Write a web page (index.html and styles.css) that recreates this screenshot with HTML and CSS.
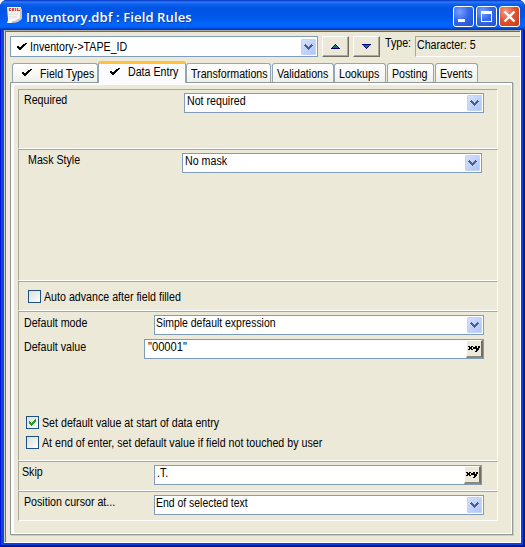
FILE: index.html
```html
<!DOCTYPE html>
<html lang="en">
<head>
<meta charset="utf-8">
<title>Inventory.dbf : Field Rules</title>
<link rel="stylesheet" href="styles.css">
</head>
<body>
<svg width="0" height="0" class="defs">
  <symbol id="tick" viewBox="0 0 10 8"><path d="M0 3h2v1h2V3h1V2h1V1h2V0h2v1H9v1H8v1H7v1H6v1H5v1H4v1H2V6H1V5H0z" fill="#000"/></symbol>
  <symbol id="chev" viewBox="0 0 9 6"><path d="M0 1h1V0h1v1h1v1h1v1h1V2h1V1h1V0h1v1h1v1H8v1H7v1H6v1H5v1H4V5H3V4H2V3H1V2H0z" fill="#4d6185"/></symbol>
  <symbol id="xy" viewBox="0 0 12 6"><path d="M0 0h2v1h1V0h2v1H4v2h1v1H3V3H2v1H0V3h1V1H0zM5 1h2v2H5zM7 0h2v2h1V0h2v2h-1v2h-1v1H9v1H7V5h1V3H7z" fill="#000"/></symbol>
</svg>
<div class="window">
  <header class="titlebar">
    <svg class="doc" width="17" height="17" viewBox="0 0 17 17"><path d="M1 0h14v12l-2 1-2 2-3-1-2 2H1l1-3z" fill="#f6f4f2"/><path d="M14 1l2 1v10l-4 3-4 1-3-1 4-1 5-3z" fill="#c9c4c4"/><path d="M2 1h12v3H2z" fill="#f3c9bd"/><path d="M3 1h2v1H4v1h1v1H3zM6 1h2v3H6zM9 1h1v3H9zM11 1h1v2h2v1h-3z" fill="#d34b3c"/><path d="M3 7h9M3 10h8" stroke="#ddd9d8"/></svg>
    <h1>Inventory.dbf : Field Rules</h1>
    <div class="winbtn"><svg width="19" height="19"><path d="M4 12h7v3H4z" fill="#fff"/></svg></div>
    <div class="winbtn"><svg width="19" height="19"><path d="M4 4h11v11H4zm1 3v7h9V7z" fill="#fff" fill-rule="evenodd"/></svg></div>
    <div class="winbtn close"><svg width="19" height="19"><path d="M4.500 4.500l10 10m0-10l-10 10" stroke="#fff" stroke-width="2.300"/></svg></div>
  </header>
  <main class="client">
    <div class="toolbar">
      <div class="combo field-combo"><svg class="tick" width="10" height="8"><use href="#tick"/></svg><span>Inventory-&gt;TAPE_ID</span><i class="drop"><svg width="9" height="6"><use href="#chev"/></svg></i></div>
      <div class="nav"><svg width="9" height="5"><path d="M4 0h1v1h1v1h1v1h1v1h1v1H0V4h1V3h1V2h1V1h1z" fill="#000080"/><path d="M4 1h1v1h1v1h1v1H2V3h1V2h1z" fill="#008080"/></svg></div>
      <div class="nav"><svg width="9" height="5"><path d="M0 0h9v1H8v1H7v1H6v1H5v1H4V4H3V3H2V2H1V1H0z" fill="#000080"/><path d="M1 1h7v1H6v1H5v1H4V3H3V2H1z" fill="#008060"/></svg></div>
      <span class="type">Type:</span>
      <div class="sunken"><span>Character: 5</span></div>
    </div>
    <nav class="tabs">
      <div class="tab t1"><svg class="tick" width="10" height="8"><use href="#tick"/></svg><span>Field Types</span></div>
      <div class="tab active"><svg class="tick" width="10" height="8"><use href="#tick"/></svg><span>Data Entry</span></div>
      <div class="tab t3"><span>Transformations</span></div>
      <div class="tab t4"><span>Validations</span></div>
      <div class="tab t5"><span>Lookups</span></div>
      <div class="tab t6"><span>Posting</span></div>
      <div class="tab t7"><span>Events</span></div>
    </nav>
    <section class="panel">
      <div class="group g-required">
        <div class="row"><label>Required</label><div class="combo w300"><span>Not required</span><i class="drop"><svg width="9" height="6"><use href="#chev"/></svg></i></div></div>
      </div>
      <div class="group g-mask">
        <div class="row"><label class="mask-label">Mask Style</label><div class="combo w300"><span>No mask</span><i class="drop"><svg width="9" height="6"><use href="#chev"/></svg></i></div></div>
      </div>
      <div class="group g-auto">
        <div class="check"><i class="box"></i><span class="auto">Auto advance after field filled</span></div>
      </div>
      <div class="group g-default">
        <div class="row"><label>Default mode</label><div class="combo w330"><span>Simple default expression</span><i class="drop"><svg width="9" height="6"><use href="#chev"/></svg></i></div></div>
        <div class="row second"><label>Default value</label><div class="combo w340"><span>"00001"</span><i class="expr"><svg width="12" height="6"><use href="#xy"/></svg></i></div></div>
        <div class="check first"><i class="box"><svg width="7" height="7"><path d="M0 2h1v1h1v1h1V3h1V2h1V1h1V0h1v3H6v1H5v1H4v1H3v1H2V6H1V5H0z" fill="#21a121"/></svg></i><span class="set">Set default value at start of data entry</span></div>
        <div class="check"><i class="box"></i><span class="end">At end of enter, set default value if field not touched by user</span></div>
      </div>
      <div class="group g-skip">
        <div class="row"><label class="skip-label">Skip</label><div class="combo w328"><span>.T.</span><i class="expr"><svg width="12" height="6"><use href="#xy"/></svg></i></div></div>
      </div>
      <div class="group g-pos">
        <div class="row"><label>Position cursor at...</label><div class="combo w330"><span>End of selected text</span><i class="drop"><svg width="9" height="6"><use href="#chev"/></svg></i></div></div>
      </div>
    </section>
  </main>
</div>
</body>
</html>
```
FILE: styles.css
```css
* { box-sizing: border-box; }
body { margin: 0; background: #fff; font: 12px/14px "Liberation Sans", sans-serif; color: #000; }
svg { display: block; flex: none; }
.defs { position: absolute; }
span, label { display: block; white-space: nowrap; transform: scaleX(0.888); transform-origin: 0 0; }
.window { width: 525px; height: 547px; padding: 0 4px 4px; border-radius: 7px 7px 0 0; background: #0b45e0; box-shadow: inset 1px 0 #0019cf, inset -2px 0 #001590, inset 0 -2px #001590; display: flex; flex-direction: column; }
.titlebar { height: 30px; flex: none; margin: 0 -4px; padding: 1px 5px 0 5px; border-radius: 7px 7px 0 0; display: flex; align-items: center; background: linear-gradient(#0830c0 0, #2b7cf8 2px, #0b62ee 4px, #0054e3 8px, #0057ea 17px, #0066ff 24px, #0062f8 27px, #0040c8 29px, #0038b8 30px); }
.titlebar h1 { flex: 1; margin: 3px 0 0 3px; font: 600 13px/18px "Open Sans", sans-serif; color: #fff; text-shadow: 1px 1px #0f3fa8; letter-spacing: 0.12px; }
.doc { margin-left: 1px; }
.winbtn { width: 21px; height: 21px; margin: 2px 0 0 2px; border: 1px solid #fff; border-radius: 3px; background: radial-gradient(circle at 30% 25%, #7ba2ff, #3568ea 45%, #2450cf); }
.winbtn.close { background: radial-gradient(circle at 30% 25%, #f3a08a, #e4532d 45%, #c93a12); }
.client { flex: 1; background: #ece9d8; border: 1px solid #fff; border-left-color: #d4d0c8; border-top-color: #aca899; padding: 5px 0 0 5px; box-shadow: inset 1px 1px #716f64; }
.toolbar { display: flex; height: 21px; }
.combo { position: relative; height: 20px; border: 1px solid #7f9db9; background: #fff; display: flex; padding: 1px 1px 1px 2px; }
.combo span { margin-top: -1px; }
.field-combo { width: 308px; height: 21px; padding: 2px 1px 1px 6px; gap: 3px; }
.field-combo span { margin-top: 1px; }
.field-combo .tick { margin-top: 4px; }
.drop { width: 15px; height: 16px; margin-left: auto; border-radius: 1px; background: linear-gradient(135deg, #d5e0fd, #adc6fa); border: 1px solid #c3d2fb; display: flex; align-items: center; justify-content: center; flex: none; }
.expr { width: 17px; height: 18px; margin: -1px -1px 0 auto; background: #ece9d8; border: 1px solid #fff; border-right: 2px solid #716f64; border-bottom: 2px solid #8c897a; display: flex; align-items: center; justify-content: center; flex: none; }
.nav { width: 27px; height: 21px; margin-left: 4px; background: #ece9d8; border: 1px solid #fff; border-right-color: #716f64; border-bottom-color: #716f64; box-shadow: inset -1px -1px #aca899; display: flex; align-items: center; justify-content: center; }
.type { width: 30px; margin-left: 5px; }
.sunken { flex: 1; border: 1px solid #aca899; border-right: 0; border-bottom-color: #fff; padding: 1px 0 0 1px; }
.tabs { display: flex; height: 25px; padding-left: 2px; align-items: flex-end; }
.tab { height: 19px; border: 1px solid #91a7b4; border-bottom: 0; border-radius: 3px 3px 0 0; background: linear-gradient(#fff, #f0f0ea); display: flex; padding: 3px 0 0 4px; }
.t1 { width: 86px; padding-left: 9px; }
.t1 span { margin-left: 8px; }
.tab .tick { margin-top: 2px; }
.active { width: 88px; height: 22px; margin-bottom: -1px; border-top: 3px solid #ffc13c; background: #fcfcfe; padding: 2px 0 0 11px; position: relative; }
.active span { margin: -1px 0 0 8px; }
.t3 { width: 85px; }
.t4 { width: 62px; margin-left: 1px; }
.t5 { width: 52px; }
.t6 { width: 47px; margin-left: 1px; }
.t7 { width: 43px; margin-left: 1px; }
.panel { width: 503px; height: 453px; border: 1px solid #919b9c; padding: 6px 0 0 7px; box-shadow: inset 3px 2px #fcfcfe, inset -1px -1px #fff, 1px 1px #d0ceb8; }
.group { width: 480px; border: 1px solid #aca899; border-right-color: #fff; border-bottom-color: #fff; padding: 3px 13px 0 5px; }
.row { display: flex; justify-content: space-between; }
.w300 { width: 300px; }
.w328 { width: 328px; }
.w330 { width: 330px; padding-left: 1px; }
.w330 span { transform: scaleX(0.87); }
.w340 { width: 340px; padding-left: 3px; }
.w340 span { transform: scaleX(0.93); }
.g-required { height: 60px; }
.g-mask { height: 132px; padding-right: 15px; }
.mask-label { margin-left: 4px; }
.g-auto { height: 30px; padding: 8px 0 0 9px; }
.g-default { height: 150px; }
.g-default label { padding-top: 1px; }
.second { margin-top: 4px; }
.check { display: flex; height: 14px; gap: 3px; }
.g-default .check { margin: 6px 0 0 2px; }
.g-default .first { margin-top: 57px; }
.box { width: 13px; height: 13px; border: 1px solid #1c5180; background: linear-gradient(135deg, #dcdcd7, #fff); display: flex; align-items: center; justify-content: center; flex: none; }
.g-skip { height: 30px; padding: 3px 15px 0 3px; }
.g-pos { height: 30px; }
```
